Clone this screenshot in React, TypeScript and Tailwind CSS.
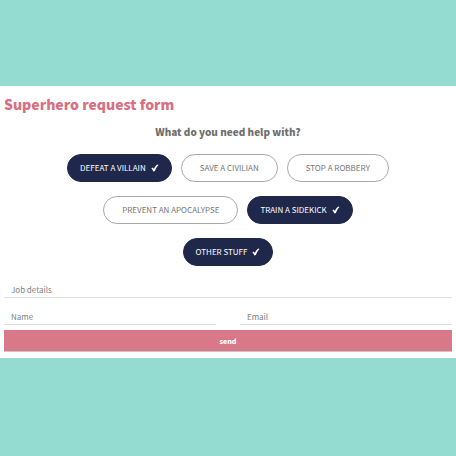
const needs = [
  { label: "Defeat a villain", checked: true },
  { label: "Save a civilian", checked: false },
  { label: "Stop a robbery", checked: false },
  { label: "Prevent an apocalypse", checked: false },
  { label: "Train a sidekick", checked: true },
  { label: "Other stuff", checked: true },
];

function NeedOption({ label, checked }: { label: string; checked: boolean }) {
  return (
    <label className="group flex h-7 cursor-pointer items-center rounded-full border border-[#a9a9a9] bg-white px-[18px] text-[8px] leading-3 text-[#757575] uppercase has-checked:border-[#1f284b] has-checked:bg-[#1f284b] has-checked:px-3 has-checked:text-white">
      <input type="checkbox" name="need" value={label} defaultChecked={checked} className="size-0 appearance-none" />
      {label}
      <svg viewBox="0 0 8 8" className="ml-[5px] hidden size-2 group-has-checked:block" fill="currentColor" aria-hidden="true">
        <path d="M.3 4.5 1.8 3.4 2.9 4.9C3.8 2.9 5 1.3 6.5.4L7.5.9C5.8 2.5 4.8 4.4 3.9 6.9L2.3 7.4C1.9 6.3 1.3 5.4.3 4.5Z" />
      </svg>
    </label>
  );
}

function Field({ label, type = "text" }: { label: string; type?: string }) {
  return (
    <input
      type={type}
      aria-label={label}
      placeholder={label}
      className="h-[17px] w-full min-w-0 border-b border-[#dedede] px-[7px] text-[8px] leading-3 outline-none placeholder:text-[#808080]"
    />
  );
}

export default function App() {
  return (
    <main className="min-h-screen bg-[#94dbd2] pt-[86px] font-['Noto_Sans_CJK_SC','Noto_Sans',sans-serif]">
      <form className="bg-white px-1 pt-2 pb-1.5">
        <h1 className="text-[14px] leading-5 font-black text-[#d86f82]">Superhero request form</h1>
        <fieldset className="min-w-0">
          <legend className="mx-auto pt-2 text-[10px] leading-5 font-black text-[#6e6e6e]">
            What do you need help with?
          </legend>
          <div className="mx-auto flex max-w-85 flex-wrap justify-center gap-x-[9px] gap-y-3.5 pt-3">
            {needs.map((need) => (
              <NeedOption key={need.label} {...need} />
            ))}
          </div>
        </fieldset>
        <div className="grid grid-cols-2 gap-x-6 gap-y-2.5 pt-[15px]">
          <div className="col-span-2 flex">
            <Field label="Job details" />
          </div>
          <Field label="Name" />
          <Field label="Email" type="email" />
        </div>
        <button type="submit" className="mt-[5px] block h-[22px] w-full border-b border-[#c9c5c6] bg-[#d87888] text-[7px] leading-3 font-black text-white">
          send
        </button>
      </form>
    </main>
  );
}
